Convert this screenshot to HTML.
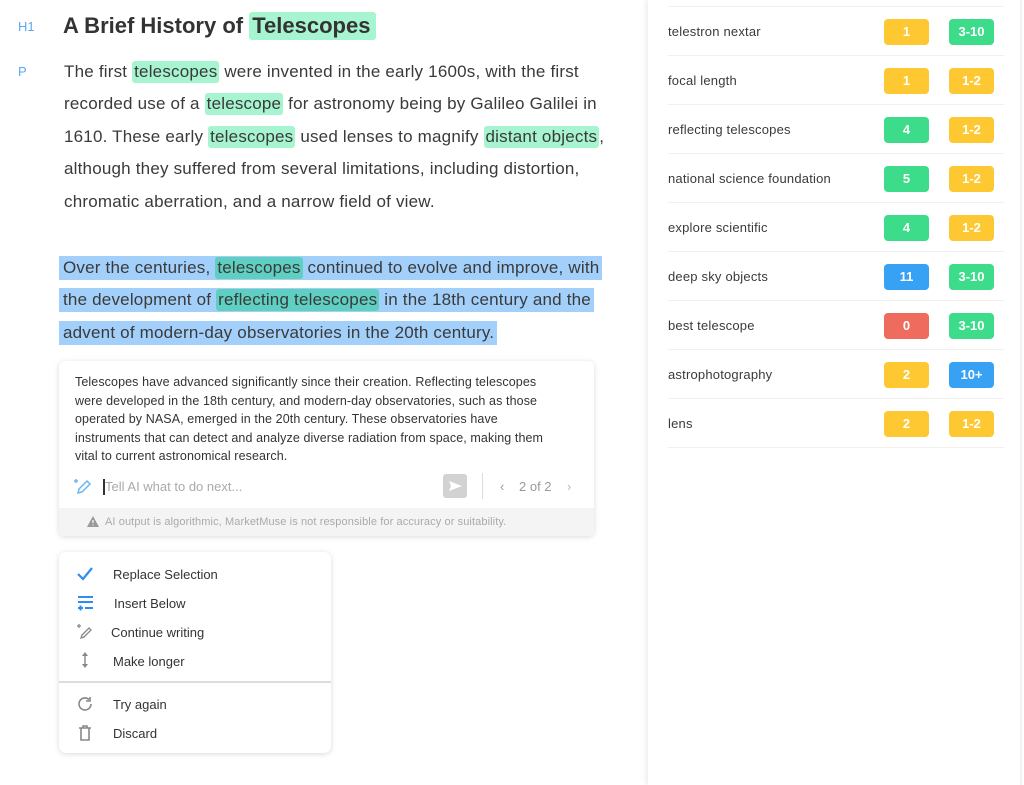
<!DOCTYPE html>
<html><head><meta charset="utf-8"><style>
*{margin:0;padding:0;box-sizing:border-box}
body{width:1024px;height:785px;background:#fff;font-family:"Liberation Sans",sans-serif;position:relative;overflow:hidden;color:#333}
.a{position:absolute;white-space:nowrap}
.lbl{color:#5aa9f0;font-size:13px}
.ln{font-size:17px;color:#3a3a3a;left:64px;height:24px;line-height:24px;letter-spacing:0.2px}
.g{background:#a6f4d0;border-radius:3px;padding:0 2px;display:inline-block;line-height:22px}
.sel{background:#a3d0fb;padding:0 3px 0 4px;margin-left:-5px;display:inline-block;line-height:24px}
.t{background:#5fcfc2;border-radius:3px;padding:0 2px;display:inline-block;line-height:22px}
.panel{position:absolute;left:648px;top:0;width:374px;height:785px;background:#fff;box-shadow:-2px 0 5px rgba(0,0,0,.08);border-right:2px solid #f2f2f2}
.row{position:absolute;left:20px;width:336px;height:49px;border-top:1.5px solid #f0f0f0}
.row span.k{position:absolute;left:0;top:17px;font-size:13px;color:#3a3a3a;letter-spacing:0.2px}
.b{position:absolute;top:12px;width:45px;height:26px;border-radius:4px;color:#fff;font-size:13px;font-weight:bold;text-align:center;line-height:26px}
.b1{left:216px}.b2{left:281px}
.y{background:#fdc831}.gr{background:#3ddc8a}.bl{background:#37a1f3}.r{background:#ee6b5d}
.card{position:absolute;left:59px;top:361px;width:535px;height:175px;background:#fff;border-radius:6px;box-shadow:0 1px 6px rgba(0,0,0,.15);overflow:hidden}
.menu{position:absolute;left:59px;top:552px;width:272px;height:201px;background:#fff;border-radius:7px;box-shadow:0 1px 6px rgba(0,0,0,.15)}
.mi{position:absolute;left:54px;font-size:13px;color:#333}
</style></head><body>
<div class="a lbl" style="left:18px;top:19px">H1</div>
<div class="a lbl" style="left:18px;top:64px">P</div>
<div class="a" style="left:63px;top:12px;font-size:22px;font-weight:bold;color:#333;line-height:28px">A Brief History of <span class="g" style="padding:0 6px 0 3px;line-height:28px">Telescopes</span></div>
<div class="a ln" style="top:60px">The first <span class="g">telescopes</span> were invented in the early 1600s, with the first</div>
<div class="a ln" style="top:92px">recorded use of a <span class="g">telescope</span> for astronomy being by Galileo Galilei in</div>
<div class="a ln" style="top:125px">1610. These early <span class="g">telescopes</span> used lenses to magnify <span class="g">distant objects</span>,</div>
<div class="a ln" style="top:157px">although they suffered from several limitations, including distortion,</div>
<div class="a ln" style="top:190px">chromatic aberration, and a narrow field of view.</div>
<div class="a ln" style="top:256px"><span class="sel">Over the centuries, <span class="t">telescopes</span> continued to evolve and improve, with </span></div>
<div class="a ln" style="top:288px"><span class="sel">the development of <span class="t">reflecting telescopes</span> in the 18th century and the </span></div>
<div class="a ln" style="top:321px"><span class="sel">advent of modern-day observatories in the 20th century. </span></div>

<div class="card">
<div class="a" style="left:16px;top:12px;font-size:12.5px;line-height:18.5px;color:#333;letter-spacing:0.1px">Telescopes have advanced significantly since their creation. Reflecting telescopes<br>were developed in the 18th century, and modern-day observatories, such as those<br>operated by NASA, emerged in the 20th century. These observatories have<br>instruments that can detect and analyze diverse radiation from space, making them<br>vital to current astronomical research.</div>
<svg class="a" style="left:14px;top:116px" width="20" height="20" viewBox="0 0 20 20" fill="none" stroke="#6ab6f5" stroke-width="1.5"><path d="M5 16l1-4 8-8 3 3-8 8z"/><path d="M3 2v4M1 4h4"/></svg>
<div class="a" style="left:44px;top:118px;width:1.5px;height:16px;background:#333"></div>
<div class="a" style="left:46px;top:118px;font-size:13px;color:#aaa">Tell AI what to do next...</div>
<div class="a" style="left:384px;top:113px;width:24px;height:24px;background:#d2d2d2;border-radius:3px"><svg width="24" height="24" viewBox="0 0 24 24"><path d="M6 7l13 5-13 5 2-5z" fill="#fff"/></svg></div>
<div class="a" style="left:423px;top:112px;width:1px;height:26px;background:#ddd"></div>
<div class="a" style="left:441px;top:118px;font-size:13px;color:#999">‹</div>
<div class="a" style="left:460px;top:118px;font-size:13px;color:#999">2 of 2</div>
<div class="a" style="left:508px;top:118px;font-size:13px;color:#bbb">›</div>
<div class="a" style="left:0;top:147px;width:535px;height:28px;background:#f4f4f4"></div>
<svg class="a" style="left:27px;top:154px" width="14" height="13" viewBox="0 0 14 13"><path d="M7 1l6 11H1z" fill="#999"/><path d="M7 5v3M7 9.5v1" stroke="#f4f4f4" stroke-width="1.3"/></svg>
<div class="a" style="left:46px;top:155px;font-size:11px;color:#aaa;letter-spacing:0.1px">AI output is algorithmic, MarketMuse is not responsible for accuracy or suitability.</div>
</div>

<div class="menu">
<svg class="a" style="left:17px;top:14px" width="18" height="16" viewBox="0 0 18 16"><path d="M2 8l5 5 9-11" fill="none" stroke="#2f8cf0" stroke-width="2.2"/></svg>
<div class="mi" style="top:15px">Replace Selection</div>
<svg class="a" style="left:18px;top:43px" width="18" height="16" viewBox="0 0 18 16" stroke="#2f8cf0" stroke-width="2" fill="none"><path d="M1 2h15M1 7h15M8 13h8M1 13h5M3.5 10.5v5"/></svg>
<div class="mi" style="top:44px;left:55px">Insert Below</div>
<svg class="a" style="left:17px;top:71px" width="18" height="18" viewBox="0 0 18 18" fill="none" stroke="#888" stroke-width="1.3"><path d="M5 15l1-3 7-7 2 2-7 7z"/><path d="M3 1v4M1 3h4"/></svg>
<div class="mi" style="top:73px;left:52px">Continue writing</div>
<svg class="a" style="left:20px;top:99px" width="12" height="18" viewBox="0 0 12 18" fill="#888"><path d="M6 1l3 4H3z M6 17l3-4H3z"/><rect x="5.3" y="4" width="1.4" height="10"/></svg>
<div class="mi" style="top:102px">Make longer</div>
<div class="a" style="left:0;top:129px;width:272px;height:1.5px;background:#ddd"></div>
<svg class="a" style="left:17px;top:143px" width="18" height="18" viewBox="0 0 18 18" fill="none" stroke="#888" stroke-width="1.6"><path d="M15 9a6 6 0 1 1-2-4.5"/><path d="M14 2v4h-4" /></svg>
<div class="mi" style="top:145px">Try again</div>
<svg class="a" style="left:19px;top:173px" width="14" height="16" viewBox="0 0 14 16" fill="none" stroke="#888" stroke-width="1.6"><path d="M1 3h12M5 3V1h4v2M3 3v12h8V3"/></svg>
<div class="mi" style="top:174px">Discard</div>
</div>

<div class="panel">
<div class="row" style="top:6px"><span class="k">telestron nextar</span><span class="b b1 y">1</span><span class="b b2 gr">3-10</span></div>
<div class="row" style="top:55px"><span class="k">focal length</span><span class="b b1 y">1</span><span class="b b2 y">1-2</span></div>
<div class="row" style="top:104px"><span class="k">reflecting telescopes</span><span class="b b1 gr">4</span><span class="b b2 y">1-2</span></div>
<div class="row" style="top:153px"><span class="k">national science foundation</span><span class="b b1 gr">5</span><span class="b b2 y">1-2</span></div>
<div class="row" style="top:202px"><span class="k">explore scientific</span><span class="b b1 gr">4</span><span class="b b2 y">1-2</span></div>
<div class="row" style="top:251px"><span class="k">deep sky objects</span><span class="b b1 bl">11</span><span class="b b2 gr">3-10</span></div>
<div class="row" style="top:300px"><span class="k">best telescope</span><span class="b b1 r">0</span><span class="b b2 gr">3-10</span></div>
<div class="row" style="top:349px"><span class="k">astrophotography</span><span class="b b1 y">2</span><span class="b b2 bl">10+</span></div>
<div class="row" style="top:398px"><span class="k">lens</span><span class="b b1 y">2</span><span class="b b2 y">1-2</span></div>
<div class="row" style="top:447px;height:1px"></div>
</div>
</body></html>
